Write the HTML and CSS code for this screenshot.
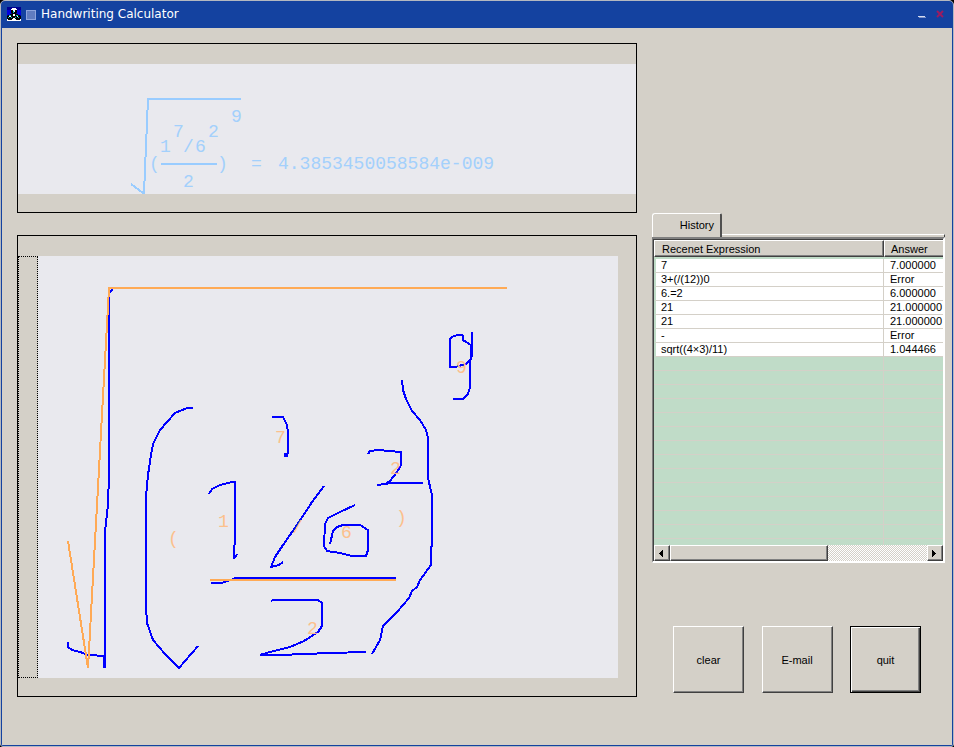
FILE: index.html
```html
<!DOCTYPE html>
<html lang="en">
<head>
<meta charset="utf-8">
<title>Handwriting Calculator</title>
<link rel="stylesheet" href="styles.css">
</head>
<body>
<div class="window">
  <header class="titlebar">
    <svg class="app-icon" viewBox="0 0 14 14" shape-rendering="crispEdges">
      <path fill="#000090" d="M0 0h14v14H0z"/>
      <path fill="#0000e0" d="M0 3h4v5H0zM10 3h4v5h-4z"/>
      <path fill="#c8d8ff" d="M0 9h14v2H0z"/>
      <path fill="#fff" d="M5 1h4v1h1v2H4V2h1zM0 11h14v3H0z"/>
      <path fill="#000" d="M4 3h2v1h2V3h2v3H9v1h2v1h2v1h1v3h-1v1H9v-1H8v-1H6v1H5v1H1v-1H0V9h1V8h2V7h2V6H4z"/>
      <path fill="#00c8c8" d="M6 4h1v2H6zM2 8h2v1H2zM4 10h1v1H4zM1 10h1v1H1zM9 8h2v1H9zM11 10h1v1h-1zM8 10h1v1H8z"/>
      <path fill="#fff" d="M6 7h2v2H6zM2 9h2v1H2zM10 9h1v1h-1zM7 3h1v2H7z"/>
    </svg>
    <span class="title-dot"></span>
    <h1 class="title">Handwriting Calculator</h1>
    <div class="window-controls">
      <button class="window-button" type="button" aria-label="Minimize">
        <svg viewBox="0 0 10 10" shape-rendering="crispEdges"><path fill="#7c93cb" d="M2 8h7v1H2z"/><path fill="#d5dcf0" d="M1 7h7v1H1z"/></svg>
      </button>
      <button class="window-button" type="button" aria-label="Close">
        <svg viewBox="0 0 10 10"><path d="M2 2l6 6M8 2l-6 6" stroke="#9c1c60" stroke-width="2" fill="none"/></svg>
      </button>
    </div>
  </header>

  <main class="content">
    <div class="boards">
      <section class="panel result-panel">
        <svg class="result" viewBox="18 64 618 130" preserveAspectRatio="xMinYMin meet">
          <path class="result-line" d="M131 184L143 193H144L148 99H241M161 164H217"/>
          <g class="result-text">
            <text x="231" y="122">9</text>
            <text x="173" y="137">7</text>
            <text x="208" y="137">2</text>
            <text x="160" y="152">1</text>
            <text x="183" y="152">/</text>
            <text x="195" y="152">6</text>
            <text x="149" y="169">(</text>
            <text x="217" y="169">)</text>
            <text x="183" y="187">2</text>
            <text x="251" y="169">=</text>
            <text x="278" y="169">4.3853450058584e-009</text>
          </g>
        </svg>
      </section>

      <section class="panel ink-panel">
        <div class="ink-handle"></div>
        <svg class="ink" viewBox="38 256 580 422" preserveAspectRatio="xMinYMin meet">
          <g class="pen">
            <path d="M113 290L110 291L109 294V473L108 505L105 532V668"/>
            <path d="M68 642V647L72 650L80 652L88 655L105 656V668"/>
            <path d="M104 656V668"/>
            <path d="M193 408H187L175 413L160 430L153 444L151 455L148 475L146 496V607L147 623L153 640L165 654L179 668L198 646"/>
            <path d="M272 417H283L287 425L288 432V453L285 456"/>
            <path class="blot" d="M284 455H288"/>
            <path d="M463 335H457L452 337L450 339V367H455L466 364L471 359V345L466 342L463 340V335"/>
            <path d="M472 332V355L470 362V387L468 394L463 399H453"/>
            <path d="M402 380L403 390L406 399L412 411L420 420L426 430L428 438V478L432 495V545L431 548V565L420 580L417 587L412 591L409 598L397 612L383 626L380 640L372 654"/>
            <path d="M368 454L370 451L378 450L401 452V465L397 472L390 481L385 484L377 485L392 483H423"/>
            <path d="M209 494L212 489L220 485L232 482H235V532L234 559L237 554"/>
            <path d="M324 486L312 502L299 522L281 548L275 557L271 567L279 565L283 562"/>
            <path d="M355 505L340 512L328 518L325 524L324 546L327 551L340 553L352 556H366L368 550V530L360 525H343L337 527L333 531L330 544"/>
            <path d="M211 583H221L228 581L236 578H396"/>
            <path d="M271 601L273 600H318L322 603V626L318 632L304 641L290 647L270 652L260 655H280L330 653L366 652"/>
          </g>
          <path class="guess-line" d="M68 541L88 668L109 288H507M210 580H396"/>
          <g class="guess-text">
            <text x="275" y="443">7</text>
            <text x="456" y="373">9</text>
            <text x="390" y="474">2</text>
            <text x="218" y="527">1</text>
            <text x="168" y="544">(</text>
            <text x="292" y="533">/</text>
            <text x="341" y="538">6</text>
            <text x="396" y="523">)</text>
            <text x="307" y="634">2</text>
          </g>
        </svg>
      </section>
    </div>

    <aside class="side">
      <div class="tabs"><button class="tab" type="button">History</button><div class="tab-edge"></div></div>
      <div class="list">
        <div class="list-view">
          <table class="history">
            <thead><tr><th class="expression">Recenet Expression</th><th class="answer">Answer</th></tr></thead>
            <tbody>
              <tr><td>7</td><td>7.000000</td></tr>
              <tr><td>3+(/(12))0</td><td>Error</td></tr>
              <tr><td>6.=2</td><td>6.000000</td></tr>
              <tr><td>21</td><td>21.000000</td></tr>
              <tr><td>21</td><td>21.000000</td></tr>
              <tr><td>-</td><td>Error</td></tr>
              <tr><td>sqrt((4×3)/11)</td><td>1.044466</td></tr>
            </tbody>
          </table>
          <div class="blank-rows"></div>
        </div>
        <div class="scrollbar">
          <button class="arrow" type="button" aria-label="Scroll left"><svg viewBox="0 0 4 7" shape-rendering="crispEdges"><path d="M3 0h1v7H3V6H2V5H1V4H0V3h1V2h1V1h1z"/></svg></button>
          <div class="thumb"></div>
          <div class="track"></div>
          <button class="arrow" type="button" aria-label="Scroll right"><svg viewBox="0 0 4 7" shape-rendering="crispEdges"><path d="M0 0h1v1h1v1h1v1h1v1H3v1H2v1H1v1H0z"/></svg></button>
        </div>
      </div>
      <div class="actions">
        <button class="action" type="button">clear</button>
        <button class="action" type="button">E-mail</button>
        <button class="action action-default" type="button">quit</button>
      </div>
    </aside>
  </main>
</div>
</body>
</html>
```
FILE: styles.css
```css
* { box-sizing: border-box; }

body {
  margin: 0;
  background: #000;
  font: 11px/14px "Liberation Sans", sans-serif;
  color: #000;
}

button {
  margin: 0;
  padding: 0;
  border: 0;
  background: #d4d0c8;
  font: inherit;
  color: inherit;
}

svg { display: block; }

.window {
  display: flex;
  flex-direction: column;
  min-height: 100vh;
  border: 1px solid #b4b8c0;
  border-radius: 5px 5px 3px 3px;
  background: #d4d0c8;
  overflow: hidden;
}

.titlebar {
  display: flex;
  align-items: center;
  height: 27px;
  padding: 0 8px 1px 6px;
  background: #1442a0;
}

.app-icon { width: 14px; height: 14px; }

.title-dot {
  width: 10px;
  height: 10px;
  margin: 2px 5px 0;
  border: 1px solid #8ea4dc;
  background: #617cc0;
}

.title {
  margin: 0;
  font: 12px/20px "DejaVu Sans", sans-serif;
  color: #fff;
}

.window-controls { display: flex; gap: 8px; margin-left: auto; }
.window-button { width: 10px; height: 10px; background: none; }

.content {
  flex: 1;
  display: grid;
  grid-template-columns: minmax(0, 1fr) 293px;
  column-gap: 15px;
  padding: 15px 7px 0 15px;
  border: solid #1442a0;
  border-width: 0 1px 1px;
}

.boards { display: flex; flex-direction: column; gap: 22px; }
.panel { border: 1px solid #000; }
.result-panel { padding: 20px 0 18px; }
.ink-panel { display: flex; padding: 20px 18px 18px 0; }

.result, .ink { background: #e9e9ee; }
.result { width: 100%; }
.ink { flex: 1; min-width: 0; }
.ink-handle { width: 20px; border: 1px dotted #000; }

.result-line { fill: none; stroke: #99ccff; stroke-width: 2; shape-rendering: crispEdges; }
.result-text { fill: #a3d0fc; font: 18px "Liberation Mono", monospace; }

.pen { fill: none; stroke: #0000ff; stroke-width: 2; shape-rendering: crispEdges; }
.blot { stroke-width: 4; }
.guess-line { fill: none; stroke: #ffaa55; stroke-width: 2; shape-rendering: crispEdges; }
.guess-text { fill: #fcc08c; font: 18px "Liberation Mono", monospace; }

.side { padding-top: 170px; }

.tabs { display: flex; height: 24px; }

.tab {
  width: 70px;
  padding: 0 6px 2px 0;
  border: 1px solid #fff;
  border-right: 2px solid #505050;
  border-bottom: 0;
  border-radius: 3px 2px 0 0;
  text-align: right;
}

.tab-edge {
  flex: 1;
  align-self: flex-end;
  height: 3px;
  border-top: 1px solid #fff;
  border-right: 1px solid #404040;
}

.list {
  display: flex;
  flex-direction: column;
  height: 326px;
  border: solid;
  border-width: 2px 2px 2px 1px;
  border-color: #808080 #fff #fff #808080;
  box-shadow: inset 1px 1px #404040;
  padding: 1px 0 0 1px;
}

.list-view {
  flex: 1;
  display: flex;
  flex-direction: column;
  background: #c0dcc8;
  overflow: hidden;
}

.history { width: 100%; border-spacing: 0; table-layout: fixed; }

.history th {
  height: 17px;
  padding: 1px 0 0 7px;
  border: 1px solid;
  border-color: #fff #404040 #404040 #fff;
  box-shadow: inset -1px -1px #808080;
  background: #d4d0c8;
  font-weight: normal;
  line-height: 13px;
  text-align: left;
}

.history .expression { width: 230px; }
.history .answer { padding-left: 6px; border-right: 0; box-shadow: inset 0 -1px #808080; }
.history tbody::before { content: ""; display: block; height: 2px; }

.history td {
  height: 14px;
  padding: 0 0 0 6px;
  border-bottom: 1px solid #d4d0c8;
  background: #fff;
  line-height: 13px;
  white-space: nowrap;
}

.history td:first-child { border-left: 2px solid #c0dcc8; border-right: 1px solid #d4d0c8; padding-left: 5px; }

.blank-rows {
  flex: 1;
  background:
    linear-gradient(#d4d0c8, #d4d0c8) 229px 0 / 1px 100% no-repeat,
    repeating-linear-gradient(transparent 0 13px, #d4d0c8 13px 14px);
}

.scrollbar { display: flex; height: 16px; }

.arrow, .thumb, .action {
  border: 1px solid;
  border-color: #fff #404040 #404040 #fff;
  box-shadow: inset -1px -1px #808080;
}

.arrow { display: grid; place-items: center; width: 16px; padding-right: 2px; }
.arrow svg { width: 4px; height: 7px; }
.thumb { width: 158px; }
.track { flex: 1; background: repeating-conic-gradient(#fff 0 25%, #d4d0c8 0 50%) 0 0 / 2px 2px; }

.actions {
  display: flex;
  justify-content: space-between;
  margin: 63px 24px 0 21px;
}

.action { width: 71px; height: 67px; }

.action-default {
  border-color: #000;
  box-shadow: inset 1px 1px #fff, inset -1px -1px #404040, inset -2px -2px #808080;
}
```
